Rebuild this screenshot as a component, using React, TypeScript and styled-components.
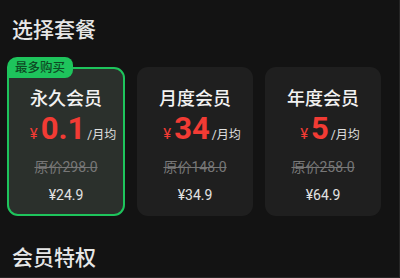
import React from "react";
import styled, { createGlobalStyle } from "styled-components";

const GlobalStyle = createGlobalStyle`
  html, body {
    margin: 0;
    padding: 0;
    background: #131313;
  }
  * {
    box-sizing: border-box;
  }
`;

const Page = styled.div`
  width: 400px;
  height: 278px;
  overflow: hidden;
  padding-top: 16px;
  background: #131313;
  border-right: 1px solid #262626;
  border-bottom: 1px solid #262626;
  font-family: "Roboto", "Noto Sans CJK SC", sans-serif;
`;

const SectionTitle = styled.h2<{ $top?: number }>`
  margin: ${(p) => p.$top ?? 0}px 0 0 12px;
  font-size: 21px;
  line-height: 28px;
  font-weight: 500;
  color: #e6e6e6;
`;

const CardRow = styled.div`
  display: flex;
  gap: 12px;
  margin-top: 23px;
  padding-left: 7px;
`;

const Card = styled.div<{ $active?: boolean }>`
  position: relative;
  flex: 0 0 auto;
  display: flex;
  flex-direction: column;
  align-items: center;
  width: ${(p) => (p.$active ? 118 : 116)}px;
  height: 149px;
  padding-top: ${(p) => (p.$active ? 18 : 20)}px;
  border-radius: 11px;
  background: ${(p) => (p.$active ? "#2b302c" : "#1f1f1f")};
  border: ${(p) => (p.$active ? "2px solid #1ec45c" : "none")};
`;

const Badge = styled.div`
  position: absolute;
  top: -12px;
  left: -2px;
  height: 21px;
  padding: 0 8px;
  border-radius: 10px 8px 8px 0;
  background: #1ec45c;
  color: #0d4a23;
  font-size: 12.5px;
  line-height: 21px;
  font-weight: 500;
`;

const PlanName = styled.div`
  font-size: 18px;
  line-height: 24px;
  font-weight: 500;
  color: #f2f2f2;
`;

const PriceRow = styled.div`
  display: flex;
  align-items: baseline;
  height: 36px;
  padding-left: 14px;
  color: #f23b34;
`;

const Currency = styled.span`
  font-size: 15px;
  margin-right: 3px;
`;

const Amount = styled.span`
  font-size: 31px;
  line-height: 36px;
  font-weight: 700;
`;

const Unit = styled.span`
  margin-left: 2px;
  font-size: 12px;
  color: #e0e0e0;
`;

const Original = styled.div`
  margin-top: 10px;
  font-size: 14px;
  line-height: 20px;
  color: #777777;
  text-decoration: line-through;
`;

const Renew = styled.div`
  margin-top: 8px;
  font-size: 14px;
  line-height: 20px;
  color: #e2e2e2;
`;

type Plan = {
  name: string;
  price: string;
  original: string;
  renew: string;
  badge?: string;
};

const plans: Plan[] = [
  { name: "永久会员", price: "0.1", original: "原价298.0", renew: "¥24.9", badge: "最多购买" },
  { name: "月度会员", price: "34", original: "原价148.0", renew: "¥34.9" },
  { name: "年度会员", price: "5", original: "原价258.0", renew: "¥64.9" },
];

const App: React.FC = () => {
  return (
    <Page>
      <GlobalStyle />
      <SectionTitle>选择套餐</SectionTitle>

      <CardRow>
        {plans.map((plan, i) => (
          <Card key={plan.name} $active={i === 0}>
            {plan.badge && <Badge>{plan.badge}</Badge>}
            <PlanName>{plan.name}</PlanName>
            <PriceRow>
              <Currency>¥</Currency>
              <Amount>{plan.price}</Amount>
              <Unit>/月均</Unit>
            </PriceRow>
            <Original>{plan.original}</Original>
            <Renew>{plan.renew}</Renew>
          </Card>
        ))}
      </CardRow>

      <SectionTitle $top={28}>会员特权</SectionTitle>
    </Page>
  );
};

export default App;
